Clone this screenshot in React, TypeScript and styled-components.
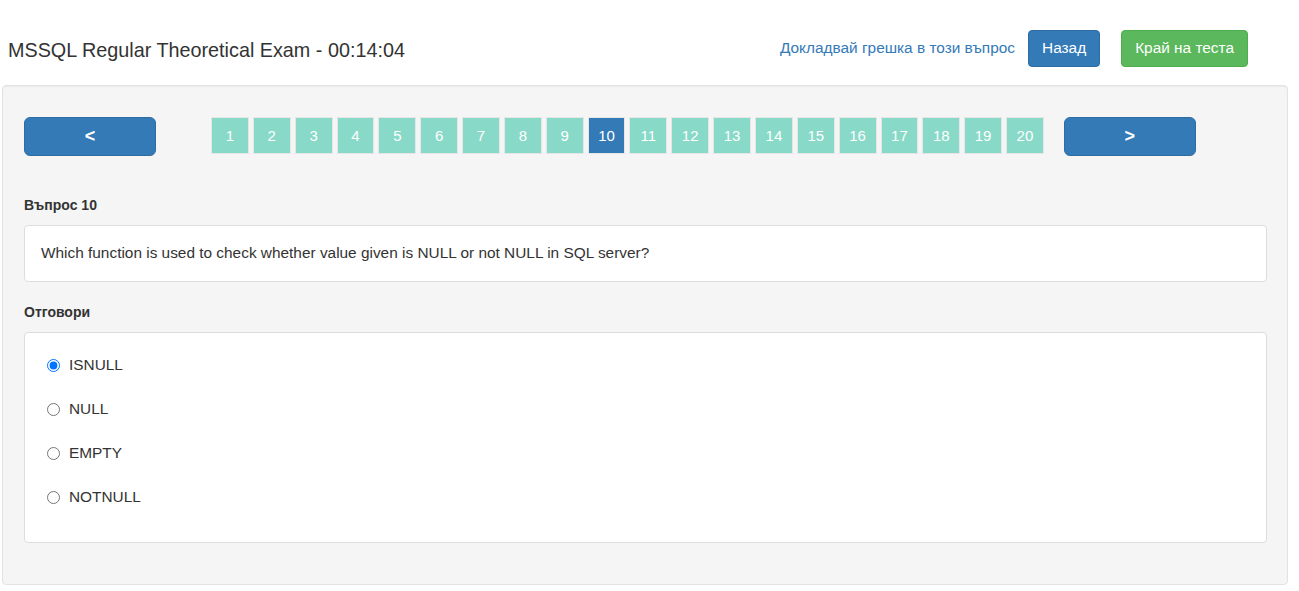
import React from "react";
import styled, { createGlobalStyle } from "styled-components";

const Global = createGlobalStyle`
  html, body { margin: 0; padding: 0; background: #fff; }
  body {
    font-family: "Liberation Sans", Arial, Helvetica, sans-serif;
    font-size: 15.4px;
    line-height: 20px;
    color: #333;
  }
  * { box-sizing: border-box; }
`;

const Header = styled.header`
  height: 85px;
  display: flex;
  align-items: center;
  padding: 11px 51px 0 8px;
`;

const Title = styled.h1`
  margin: 0;
  padding-top: 4px;
  font-size: 19.8px;
  font-weight: 400;
  line-height: 24px;
  color: #333;
  flex: 1;
`;

const ReportLink = styled.a`
  color: #337ab7;
  text-decoration: none;
  margin-right: 13px;
  cursor: pointer;
`;

const Btn = styled.button<{ $variant: "primary" | "success" }>`
  height: 37px;
  padding: 0 13px;
  font-family: inherit;
  font-size: 15.4px;
  color: #fff;
  border-radius: 4px;
  border: 1px solid ${(p) => (p.$variant === "primary" ? "#2e6da4" : "#4cae4c")};
  background: ${(p) => (p.$variant === "primary" ? "#337ab7" : "#5cb85c")};
  cursor: pointer;
  & + & { margin-left: 21px; }
`;

const Well = styled.main`
  margin: 0 11px 0 2px;
  min-height: 500px;
  padding: 31px 20px 41px 21px;
  background: #f5f5f5;
  border: 1px solid #e3e3e3;
  border-radius: 4px;
  box-shadow: inset 0 1px 1px rgba(0, 0, 0, 0.05);
`;

const NavRow = styled.nav`
  display: flex;
  align-items: flex-start;
  height: 39px;
`;

const ArrowBtn = styled.button`
  width: 132px;
  height: 39px;
  background: #337ab7;
  border: 1px solid #2e6da4;
  border-radius: 6px;
  color: #fff;
  font-family: inherit;
  font-size: 18px;
  font-weight: 700;
  cursor: pointer;
`;

const Pages = styled.div`
  display: flex;
  gap: 4px;
  margin: 0 20px 0 55px;
`;

const PageBox = styled.button<{ $active?: boolean }>`
  width: 37.85px;
  height: 37px;
  padding: 0;
  border: 1px solid #e6e6e6;
  background: ${(p) => (p.$active ? "#337ab7" : "#88d9c8")};
  color: #fff;
  font-family: inherit;
  font-size: 15px;
  cursor: pointer;
`;

const SectionLabel = styled.h4<{ $top: number }>`
  margin: ${(p) => p.$top}px 0 10px;
  font-size: 14px;
  font-weight: 700;
  line-height: 20px;
`;

const Panel = styled.div`
  background: #fff;
  border: 1px solid #ddd;
  border-radius: 4px;
`;

const QuestionText = styled.p`
  margin: 0;
  padding: 17px 16px 18px;
`;

const Answers = styled.div`
  display: flex;
  flex-direction: column;
  gap: 24px;
  padding: 22px 22px 35px;
`;

const AnswerRow = styled.label`
  display: flex;
  align-items: center;
  height: 20px;
  gap: 9px;
  cursor: pointer;
`;

const Radio = styled.input`
  margin: 0;
  width: 13px;
  height: 13px;
`;

const answers = ["ISNULL", "NULL", "EMPTY", "NOTNULL"];

export default function App() {
  return (
    <>
      <Global />
      <Header>
        <Title>MSSQL Regular Theoretical Exam - 00:14:04</Title>
        <ReportLink>Докладвай грешка в този въпрос</ReportLink>
        <Btn $variant="primary">Назад</Btn>
        <Btn $variant="success">Край на теста</Btn>
      </Header>
      <Well>
        <NavRow>
          <ArrowBtn>&lt;</ArrowBtn>
          <Pages>
            {Array.from({ length: 20 }, (_, i) => (
              <PageBox key={i} $active={i === 9}>
                {i + 1}
              </PageBox>
            ))}
          </Pages>
          <ArrowBtn>&gt;</ArrowBtn>
        </NavRow>
        <SectionLabel $top={39}>Въпрос 10</SectionLabel>
        <Panel>
          <QuestionText>
            Which function is used to check whether value given is NULL or not NULL in SQL server?
          </QuestionText>
        </Panel>
        <SectionLabel $top={20}>Отговори</SectionLabel>
        <Panel>
          <Answers>
            {answers.map((a, i) => (
              <AnswerRow key={a}>
                <Radio type="radio" name="answer" defaultChecked={i === 0} />
                {a}
              </AnswerRow>
            ))}
          </Answers>
        </Panel>
      </Well>
    </>
  );
}
